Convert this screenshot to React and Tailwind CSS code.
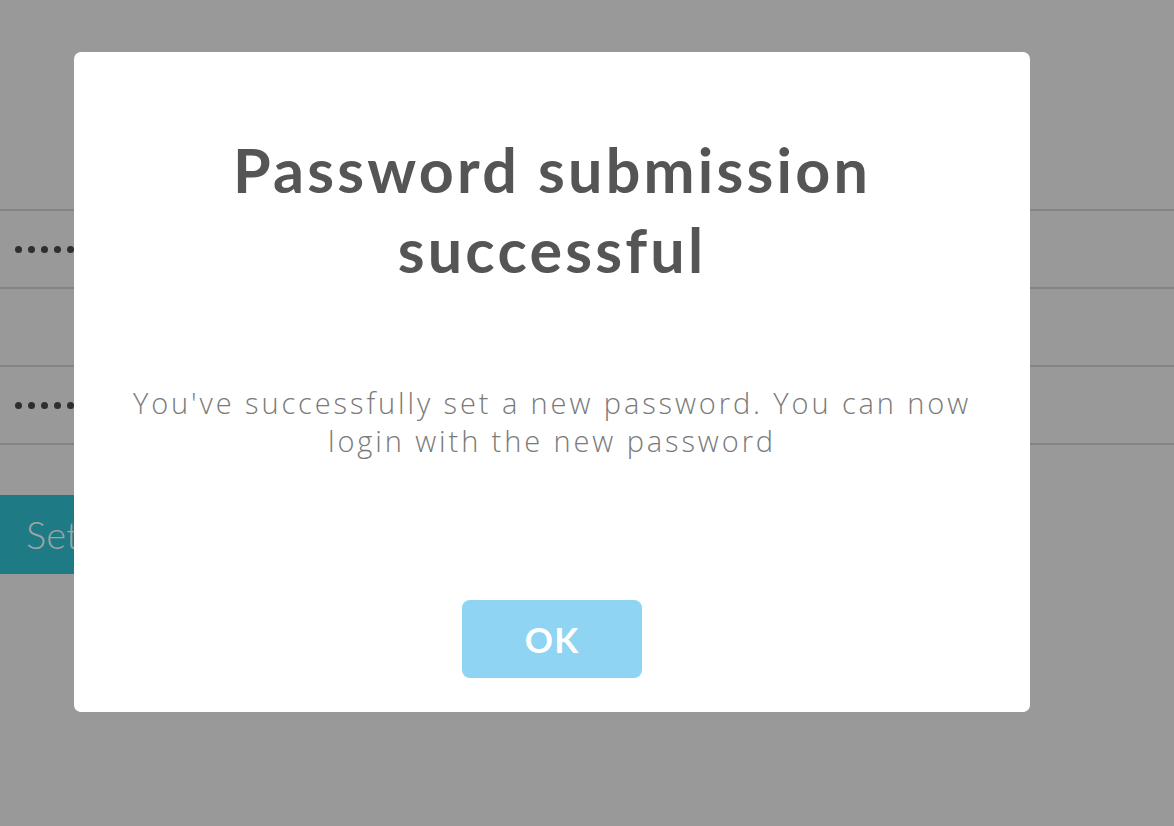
import React from 'react';

function Field({ filled }) {
  return (
    <div className="h-[78px] border-b-2 border-[#848484] flex items-center pl-[15px]">
      {filled && (
        <div className="flex gap-[6px]">
          {[0, 1, 2, 3, 4, 5, 6, 7].map((i) => (
            <span key={i} className="w-[7px] h-[7px] rounded-full bg-[#2e2e2e]" />
          ))}
        </div>
      )}
    </div>
  );
}

export default function App() {
  return (
    <div className="relative w-[1174px] h-[826px] overflow-hidden bg-[#999999]" style={{ fontFamily: 'Lato, "Open Sans", sans-serif' }}>
      {/* Page behind the modal */}
      <div className="pt-[209px]">
        <div className="border-t-2 border-[#848484]">
          <Field filled />
          <Field />
          <Field filled />
        </div>
        <button className="mt-[50px] h-[79px] w-[420px] rounded-r-[6px] bg-[#1e7b85] text-left pl-[26px] text-[38px] font-light text-[#a3a3a3] whitespace-nowrap">
          Set new password
        </button>
      </div>

      {/* Modal */}
      <div className="absolute left-[74px] top-[52px] w-[956px] h-[660px] bg-white rounded-[7px] flex flex-col items-center">
        <h1 className="shrink-0 mt-[78px] text-center text-[61px] leading-[80px] font-bold text-[#555555] tracking-[3.2px] whitespace-nowrap">
          Password submission
          <br />
          successful
        </h1>
        <p
          className="shrink-0 mt-[94px] text-center text-[29px] leading-[38px] font-light text-[#7a7a7a] tracking-[2.9px] whitespace-nowrap"
          style={{ fontFamily: '"Open Sans", Lato, sans-serif' }}
        >
          You've successfully set a new password. You can now
          <br />
          login with the new password
        </p>
        <button className="shrink-0 mt-[140px] w-[180px] h-[78px] rounded-[8px] bg-[#8fd4f2] text-white font-bold text-[35px] tracking-[1px]">
          OK
        </button>
      </div>
    </div>
  );
}
